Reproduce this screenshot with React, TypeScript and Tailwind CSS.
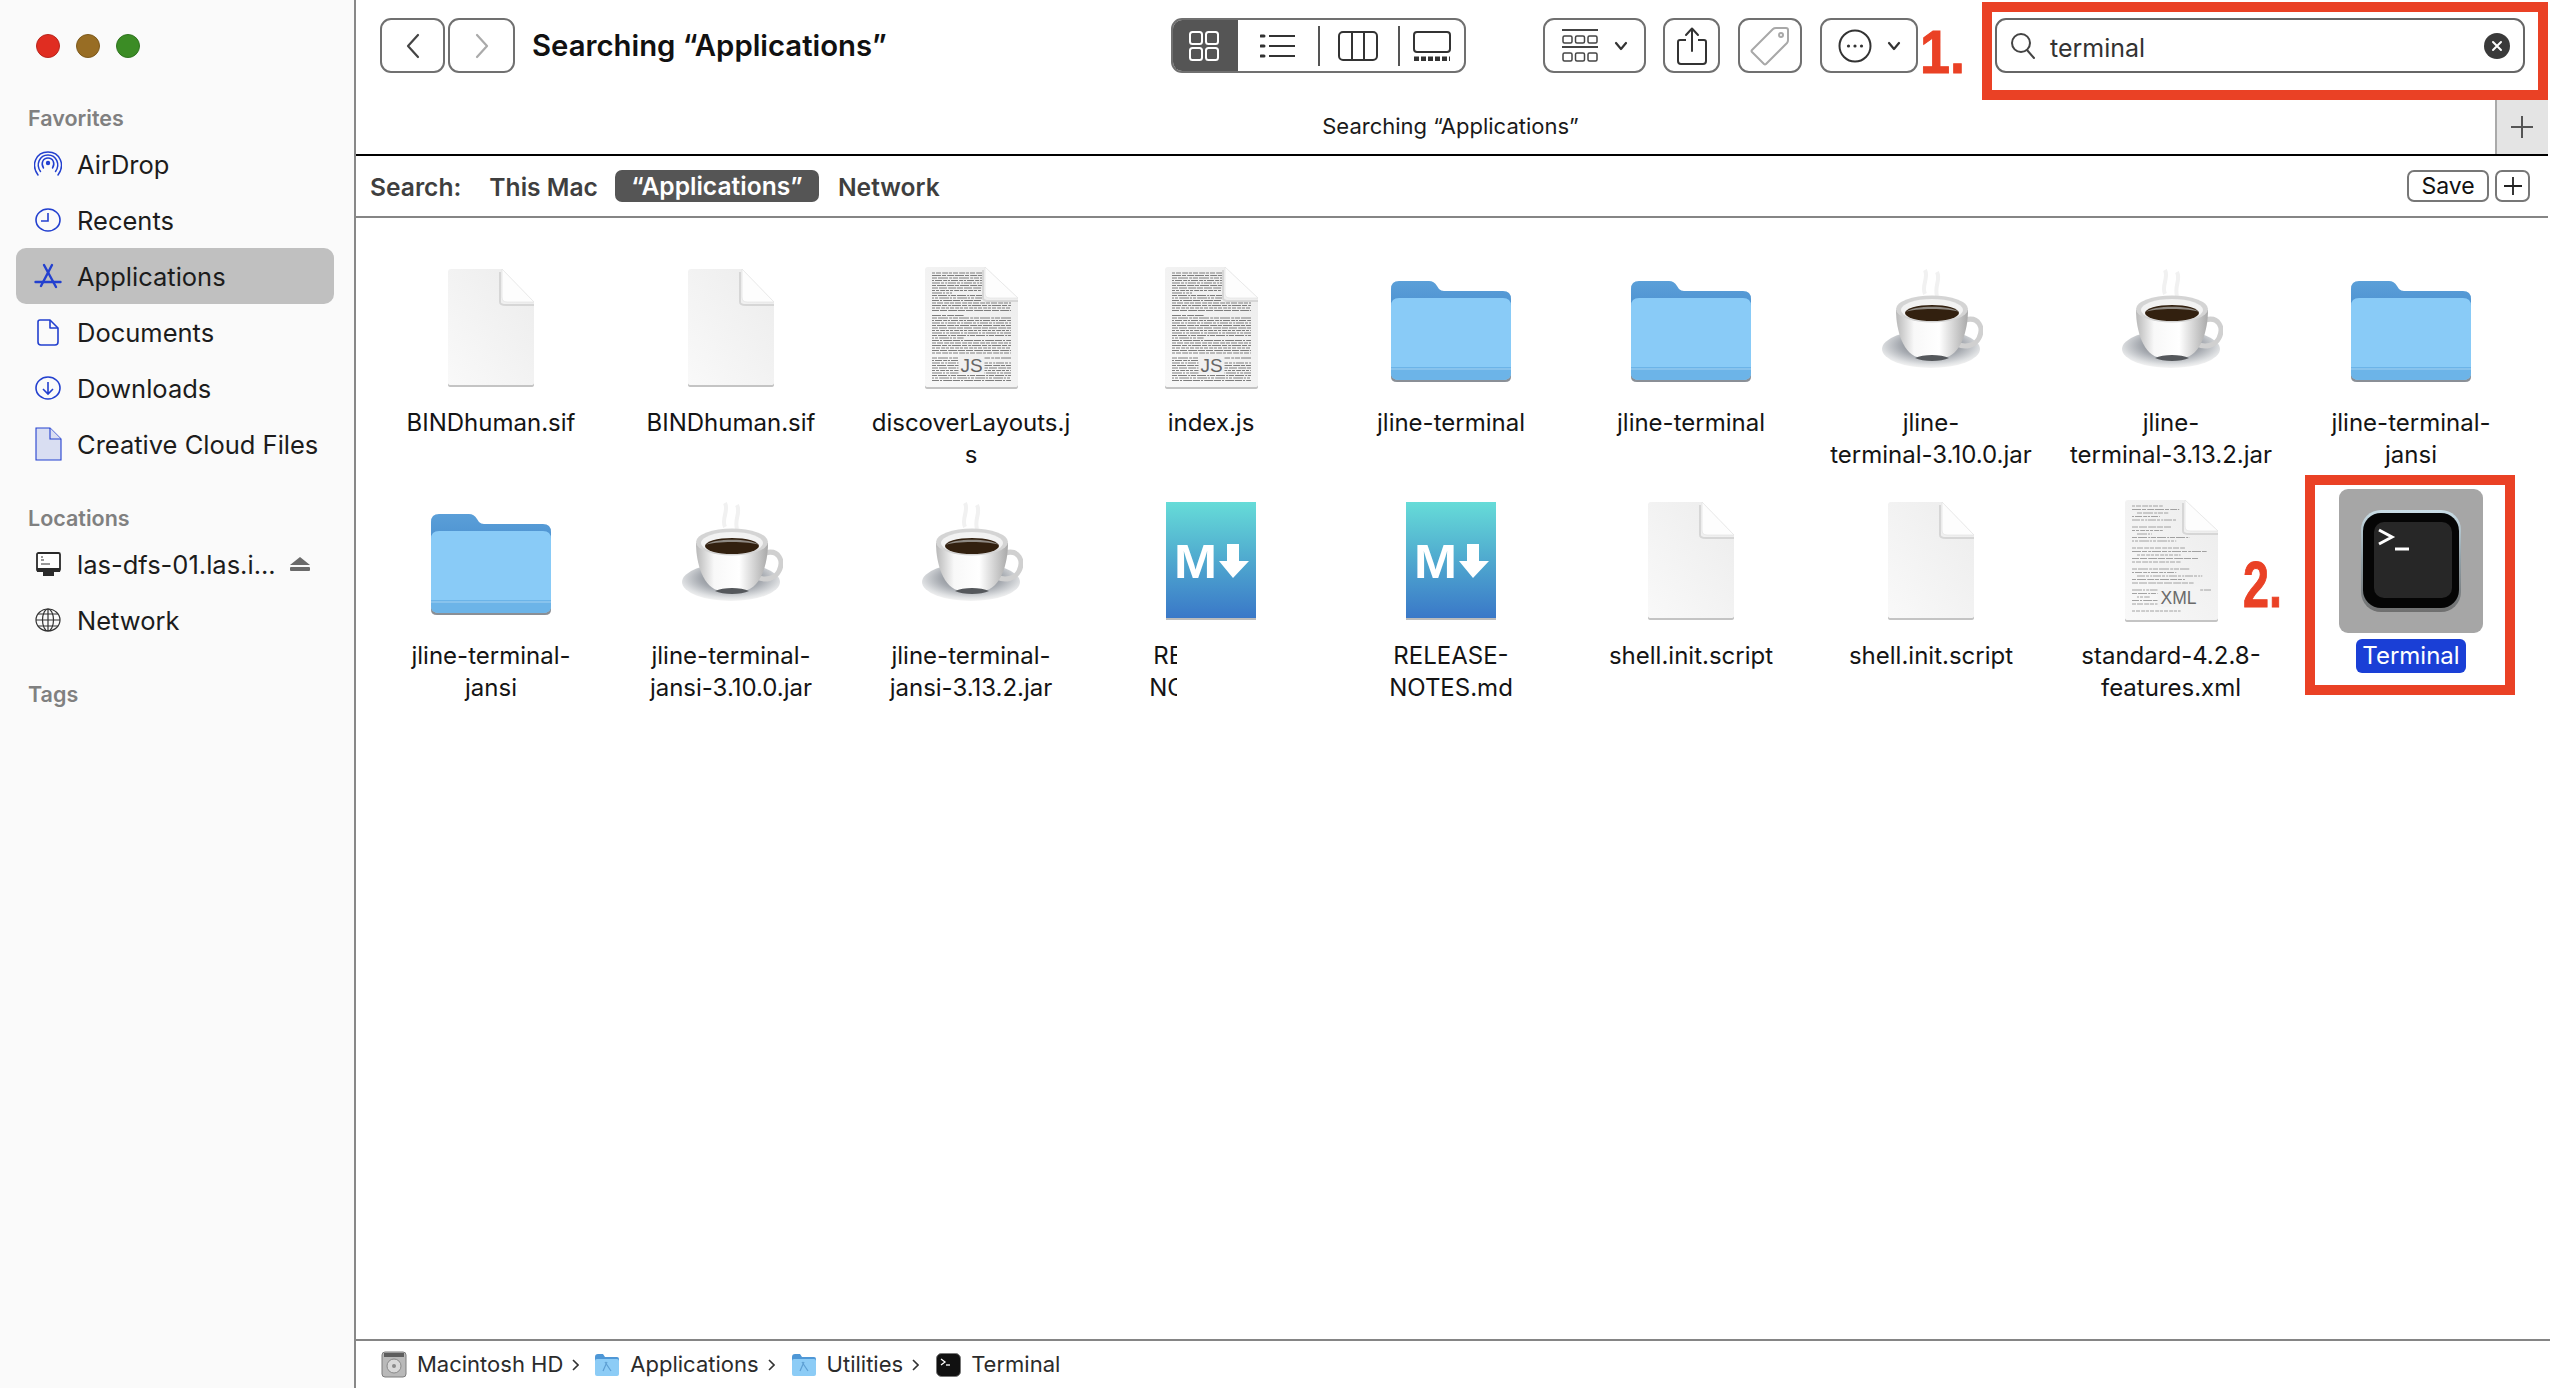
import React from "react";

const font = "font-['Inter','Liberation_Sans',sans-serif]";

function AirDropIcon() {
  return (
    <svg width="28" height="26" viewBox="0 0 28 26" fill="none" stroke="#2340cf" strokeWidth="1.5" strokeLinecap="round">
      <circle cx="14" cy="12" r="2.2" fill="#2340cf" stroke="none" />
      <path d="M9.5 17 C6.5 12.5 9 7 14 7 C19 7 21.5 12.5 18.5 17" />
      <path d="M6.5 20.5 C1.5 13.5 5.5 4 14 4 C22.5 4 26.5 13.5 21.5 20.5" />
      <path d="M4 24 C-3.5 14 2 1 14 1 C26 1 31.5 14 24 24" />
    </svg>
  );
}
function ClockIcon() {
  return (
    <svg width="26" height="24" viewBox="0 0 26 24" fill="none" stroke="#2340cf" strokeWidth="1.6">
      <ellipse cx="13" cy="12" rx="12" ry="11" />
      <path d="M13 5 V13 H6" />
    </svg>
  );
}
function AppsIcon() {
  return (
    <svg width="28" height="26" viewBox="0 0 28 26" fill="none" stroke="#2340cf" strokeWidth="2.4" strokeLinecap="round">
      <path d="M18 2 L7 23" />
      <path d="M10 2 L22 24" />
      <path d="M1.5 19 H26.5" />
    </svg>
  );
}
function DocSmallIcon() {
  return (
    <svg width="22" height="27" viewBox="0 0 22 27" fill="none" stroke="#2340cf" strokeWidth="1.6" strokeLinejoin="round">
      <path d="M3 1 H13 L21 9 V23 Q21 26 18 26 H4 Q1 26 1 23 V3 Q1 1 3 1 Z" />
      <path d="M13 1 V9 H21" />
    </svg>
  );
}
function DownloadIcon() {
  return (
    <svg width="26" height="24" viewBox="0 0 26 24" fill="none" stroke="#2340cf" strokeWidth="1.6">
      <ellipse cx="13" cy="12" rx="12" ry="11" />
      <path d="M13 6 V18 M8 13 L13 18 L18 13" />
    </svg>
  );
}
function CloudFileIcon() {
  return (
    <svg width="27" height="34" viewBox="0 0 27 34" fill="#d9def2" stroke="#2340cf" strokeWidth="1.1">
      <path d="M1 1 H15 L26 12 V33 H1 Z" />
      <path d="M15 1 V12 H26" />
    </svg>
  );
}
function ServerIcon() {
  return (
    <svg width="25" height="25" viewBox="0 0 25 25" fill="none">
      <rect x="1" y="1" width="23" height="18" rx="1.5" fill="#fff" stroke="#2a2a2a" strokeWidth="1.8" />
      <path d="M5 5 H7 M5 8 H8 M5 12 H14" stroke="#333" strokeWidth="1" />
      <rect x="1" y="16" width="23" height="4" fill="#2a2a2a" />
      <rect x="7" y="20" width="11" height="4" fill="#2a2a2a" />
    </svg>
  );
}
function GlobeIcon() {
  return (
    <svg width="26" height="24" viewBox="0 0 26 24" fill="none" stroke="#333" strokeWidth="1.2">
      <ellipse cx="13" cy="12" rx="12" ry="11" />
      <ellipse cx="13" cy="12" rx="5.5" ry="11" />
      <path d="M13 1 V23 M1 12 H25 M3 6 H23 M3 18 H23" />
    </svg>
  );
}

function Chevron({ dir, color }: { dir: "l" | "r"; color: string }) {
  return (
    <svg width="16" height="26" viewBox="0 0 16 26" fill="none" stroke={color} strokeWidth="2.2" strokeLinecap="round" strokeLinejoin="round">
      <path d={dir === "l" ? "M13 2 L3 13 L13 24" : "M3 2 L13 13 L3 24"} />
    </svg>
  );
}
function GridViewIcon() {
  return (
    <svg width="32" height="32" viewBox="0 0 32 32" fill="none" stroke="#fff" strokeWidth="2">
      <rect x="2" y="2" width="12" height="12" rx="2.5" />
      <rect x="18" y="2" width="12" height="12" rx="2.5" />
      <rect x="2" y="18" width="12" height="12" rx="2.5" />
      <rect x="18" y="18" width="12" height="12" rx="2.5" />
    </svg>
  );
}
function ListViewIcon() {
  return (
    <svg width="36" height="26" viewBox="0 0 36 26" fill="none" stroke="#333" strokeWidth="1.8">
      <path d="M9 3 H35 M9 13 H35 M9 23 H35" />
      <path d="M1 3 H4 M1 13 H4 M1 23 H4" strokeWidth="3" strokeLinecap="round" />
    </svg>
  );
}
function ColumnViewIcon() {
  return (
    <svg width="40" height="30" viewBox="0 0 40 30" fill="none" stroke="#333" strokeWidth="2">
      <rect x="1" y="1" width="38" height="28" rx="4" />
      <path d="M14 1 V29 M26 1 V29" />
    </svg>
  );
}
function GalleryViewIcon() {
  return (
    <svg width="38" height="30" viewBox="0 0 38 30" fill="none" stroke="#333" strokeWidth="2">
      <rect x="1" y="1" width="36" height="20" rx="3" />
      <path d="M1 28 H37" strokeWidth="5" strokeDasharray="5 2" />
    </svg>
  );
}
function GroupIcon() {
  return (
    <svg width="36" height="34" viewBox="0 0 36 34" fill="none" stroke="#444" strokeWidth="1.5">
      <path d="M0 1 H36 M0 18 H36" strokeWidth="2" />
      <rect x="1" y="7" width="9" height="7" rx="1.5" />
      <rect x="13.5" y="7" width="9" height="7" rx="1.5" />
      <rect x="26" y="7" width="9" height="7" rx="1.5" />
      <rect x="1" y="24" width="9" height="8" rx="1.5" />
      <rect x="13.5" y="24" width="9" height="8" rx="1.5" />
      <rect x="26" y="24" width="9" height="8" rx="1.5" />
    </svg>
  );
}
function SmallDown() {
  return (
    <svg width="14" height="10" viewBox="0 0 14 10" fill="none" stroke="#333" strokeWidth="2.2" strokeLinecap="round" strokeLinejoin="round">
      <path d="M2 2 L7 8 L12 2" />
    </svg>
  );
}
function ShareIcon() {
  return (
    <svg width="30" height="38" viewBox="0 0 30 38" fill="none" stroke="#333" strokeWidth="2" strokeLinejoin="round">
      <path d="M9 13 H3 Q1 13 1 15 V34 Q1 37 4 37 H26 Q29 37 29 34 V15 Q29 13 27 13 H21" />
      <path d="M15 24 V2 M9 8 L15 1.5 L21 8" strokeLinecap="round" />
    </svg>
  );
}
function TagIcon() {
  return (
    <svg width="40" height="40" viewBox="0 0 40 40" fill="none" stroke="#a8a8a8" strokeWidth="2" strokeLinejoin="round">
      <path d="M2 24 L23 3 Q24 2 26 2 L36 2 Q38 2 38 4 L38 14 Q38 16 37 17 L16 38 Q15 39 14 38 L2 26 Q1 25 2 24 Z" />
      <circle cx="31" cy="9" r="2" />
    </svg>
  );
}
function MoreIcon() {
  return (
    <svg width="34" height="34" viewBox="0 0 34 34" fill="none" stroke="#333" strokeWidth="2">
      <circle cx="17" cy="17" r="15.5" />
      <circle cx="10.5" cy="17" r="1.6" fill="#333" stroke="none" />
      <circle cx="17" cy="17" r="1.6" fill="#333" stroke="none" />
      <circle cx="23.5" cy="17" r="1.6" fill="#333" stroke="none" />
    </svg>
  );
}
function SearchGlass() {
  return (
    <svg width="26" height="28" viewBox="0 0 26 28" fill="none" stroke="#444" strokeWidth="2" strokeLinecap="round">
      <ellipse cx="11" cy="11" rx="9" ry="9" />
      <path d="M17 18 L24 26" />
    </svg>
  );
}
function ClearIcon() {
  return (
    <svg width="26" height="26" viewBox="0 0 26 26" fill="none">
      <circle cx="13" cy="13" r="13" fill="#3a3a3a" />
      <path d="M9 9 L17 17 M17 9 L9 17" stroke="#fff" strokeWidth="2" strokeLinecap="round" />
    </svg>
  );
}

const seeds = [7, 3, 9, 5, 2, 8, 4, 6, 3, 10, 5, 2, 7, 4, 9, 3];
function DocIcon({ kind }: { kind: "blank" | "js" | "xml" }) {
  const blank = kind === "blank";
  const w = blank ? 86 : 93;
  const h = blank ? 116 : 120;
  const f = blank ? 54 : 60;
  const fh = blank ? 33 : 31;
  const rows: React.ReactNode[] = [];
  if (!blank) {
    let i = 0;
    for (let y = 6; y < h - 6; y += kind === "js" ? 2.5 : 3.5) {
      i++;
      const a = seeds[i % seeds.length];
      const b = seeds[(i * 3) % seeds.length];
      const c = seeds[(i * 5 + 2) % seeds.length];
      if (kind === "xml" && i % 6 === 0) continue;
      if (kind === "js" && i % 17 === 0) continue;
      const limit = y < fh + 4 ? f - 10 : w - 14;
      const full = kind === "js" ? limit : limit * (0.45 + (a / 10) * 0.55);
      const width = i % 9 === 0 ? full * 0.4 : full;
      rows.push(
        <line
          key={i}
          x1={kind === "xml" && i % 3 === 0 ? 12 : 7}
          x2={7 + width}
          y1={y}
          y2={y}
          stroke={kind === "js" ? "#6f6f6f" : "#8d8d8d"}
          strokeWidth={kind === "js" ? 0.9 : 0.8}
          strokeDasharray={`${a} 1 ${b} 1.2 ${c} 0.8`}
        />
      );
    }
  }
  return (
    <svg width={w} height={h + 3} viewBox={`0 0 ${w} ${h + 3}`}>
      <defs>
        <linearGradient id={`doc${kind}`} x1="1" y1="0" x2="0" y2="1">
          <stop offset="0" stopColor="#ececec" />
          <stop offset="1" stopColor="#f9f9f9" />
        </linearGradient>
      </defs>
      <path d={`M3 2 H${f} L${w} ${fh + 2} V${h} Q${w} ${h + 2} ${w - 3} ${h + 2} H3 Q0 ${h + 2} 0 ${h} V4 Q0 2 3 2 Z`} fill="#c4c4c4" />
      <path d={`M3 0 H${f} L${w} ${fh} V${h - 2} Q${w} ${h} ${w - 3} ${h} H3 Q0 ${h} 0 ${h - 2} V3 Q0 0 3 0 Z`} fill={`url(#doc${kind})`} />
      {rows}
      <path d={`M${f - 2} 3 V${fh} Q${f - 2} ${fh + 3} ${f + 4} ${fh + 3} H${w}`} fill="none" stroke="#d6d6d6" strokeWidth="2" />
      <path d={`M${f} 0 L${w} ${fh} H${f + 5} Q${f} ${fh} ${f} ${fh - 5} Z`} fill="#fdfdfd" stroke="#e4e4e4" strokeWidth="0.8" />
      {kind === "js" && (
        <>
          <rect x={w / 2 - 13} y={h - 33} width="26" height="20" fill="#f0f0f0" />
          <text x={w / 2} y={h - 15} textAnchor="middle" fontFamily="Liberation Sans" fontSize="19" fill="#666">JS</text>
        </>
      )}
      {kind === "xml" && (
        <>
          <rect x={w / 2 - 14} y={h - 33} width="42" height="20" fill="#f3f3f3" />
          <text x={w / 2 + 7} y={h - 16} textAnchor="middle" fontFamily="Liberation Sans" fontSize="18" fill="#6a6a6a" textLength="36" lengthAdjust="spacingAndGlyphs">XML</text>
        </>
      )}
    </svg>
  );
}

function FolderIcon() {
  return (
    <svg className="mt-[7px]" width="120" height="102" viewBox="0 0 120 102">
      <defs>
        <linearGradient id="folderBack" x1="0" y1="0" x2="0" y2="1">
          <stop offset="0" stopColor="#5b9fd8" />
          <stop offset="1" stopColor="#4288cc" />
        </linearGradient>
      </defs>
      <path d="M0 8 Q0 0 8 0 H38 Q43 0 46 5 L48 8 Q50 10 53 10 H112 Q120 10 120 18 V50 H0 Z" fill="url(#folderBack)" />
      <path d="M0 96 Q0 101 6 101 H114 Q120 101 120 96 V90 H0 Z" fill="#8a8f96" />
      <path d="M0 25 Q0 17 8 17 H112 Q120 17 120 25 V92 Q120 99 112 99 H8 Q0 99 0 92 Z" fill="#89cbf7" />
      <path d="M0 86 H120 V92 Q120 99 112 99 H8 Q0 99 0 92 Z" fill="#6cb4e8" />
      <path d="M0 88 H120" stroke="#92c9ef" strokeWidth="1.5" />
    </svg>
  );
}

function CoffeeIcon() {
  return (
    <svg className="mb-[16px]" width="104" height="104" viewBox="0 0 104 104">
      <defs>
        <radialGradient id="saucer" cx="0.5" cy="0.4" r="0.6">
          <stop offset="0" stopColor="#5f6268" />
          <stop offset="0.55" stopColor="#a9adb3" />
          <stop offset="0.85" stopColor="#dfe1e3" />
          <stop offset="1" stopColor="#f4f4f4" />
        </radialGradient>
        <linearGradient id="mug" x1="0" y1="0" x2="1" y2="0">
          <stop offset="0" stopColor="#b8b8b8" />
          <stop offset="0.25" stopColor="#f8f8f8" />
          <stop offset="0.6" stopColor="#ffffff" />
          <stop offset="1" stopColor="#a9a9a9" />
        </linearGradient>
      </defs>
      <path d="M46 26 C42 18 50 10 46 2 M58 28 C55 18 62 12 58 4" fill="none" stroke="#f1f1f1" strokeWidth="4" />
      <ellipse cx="52" cy="81" rx="49" ry="19" fill="url(#saucer)" />
      <path d="M86 52 C100 48 105 60 100 70 C96 78 86 80 78 76" fill="none" stroke="#d0d0d0" strokeWidth="5" />
      <path d="M17 42 C17 62 24 88 42 90 H64 C82 88 89 62 89 42 Z" fill="url(#mug)" />
      <path d="M36 90 C44 94 62 94 70 90 C62 86 44 86 36 90 Z" fill="#55585c" />
      <ellipse cx="53" cy="41" rx="36" ry="13.5" fill="#d4d4d4" />
      <ellipse cx="53" cy="42" rx="31" ry="11" fill="#f2f2f2" />
      <ellipse cx="53" cy="45" rx="27" ry="8" fill="#32200f" />
      <path d="M27 44 C34 37 72 37 80 44 C72 40 34 40 27 44 Z" fill="#8f8a84" />
    </svg>
  );
}

function MdIcon() {
  return (
    <svg width="92" height="118" viewBox="0 0 92 118">
      <defs>
        <linearGradient id="mdg" x1="0" y1="0" x2="0" y2="1">
          <stop offset="0" stopColor="#66dcd8" />
          <stop offset="0.5" stopColor="#4fa9cf" />
          <stop offset="1" stopColor="#3a78c8" />
        </linearGradient>
      </defs>
      <rect x="1" y="116" width="90" height="2" fill="#bcbcbc" />
      <rect x="1" y="0" width="90" height="116" fill="url(#mdg)" />
      <text x="9" y="76" fontFamily="Liberation Sans" fontWeight="700" fontSize="48" fill="#fff" textLength="43" lengthAdjust="spacingAndGlyphs">M</text>
      <path d="M62 42 H74 V59 H84 L68 76 L54 59 H62 Z" fill="#fff" />
    </svg>
  );
}

function TerminalIcon() {
  return (
    <svg width="100" height="102" viewBox="0 0 100 102">
      <defs>
        <linearGradient id="termEdge" x1="0" y1="0" x2="0" y2="1">
          <stop offset="0" stopColor="#c9dde6" />
          <stop offset="0.5" stopColor="#8f9ea5" />
          <stop offset="1" stopColor="#6f6f6f" />
        </linearGradient>
      </defs>
      <rect x="0" y="0" width="100" height="102" rx="20" fill="url(#termEdge)" />
      <rect x="2" y="3" width="96" height="95" rx="18" fill="#050505" />
      <rect x="13" y="12" width="78" height="76" rx="10" fill="#272727" />
      <path d="M18 20 L31 27 L18 34" fill="none" stroke="#fff" strokeWidth="3" />
      <path d="M34 39 H48" stroke="#fff" strokeWidth="3" />
    </svg>
  );
}

function SmallHd() {
  return (
    <svg width="26" height="27" viewBox="0 0 26 27">
      <rect x="1" y="1" width="24" height="25" rx="3" fill="#b9b9b9" stroke="#7c7c7c" />
      <rect x="3" y="2" width="20" height="4" fill="#5e5e5e" />
      <circle cx="13" cy="15" r="7" fill="#d9d9d9" stroke="#8a8a8a" />
      <circle cx="13" cy="15" r="2" fill="#8a8a8a" />
    </svg>
  );
}
function SmallFolder() {
  return (
    <svg width="26" height="24" viewBox="0 0 26 24">
      <path d="M1 4 Q1 1 4 1 H9 L11 4 H23 Q25 4 25 6 V10 H1 Z" fill="#4e97d6" />
      <path d="M1 8 Q1 6 3 6 H23 Q25 6 25 8 V21 Q25 23 23 23 H3 Q1 23 1 21 Z" fill="#8cccf6" />
      <path d="M9 18 L13 9 M17 18 L11 9" stroke="#5d9fd3" strokeWidth="1.2" />
    </svg>
  );
}
function SmallTerminal() {
  return (
    <svg width="25" height="24" viewBox="0 0 25 24">
      <rect x="0.5" y="0.5" width="24" height="23" rx="5" fill="#111" stroke="#777" />
      <path d="M5 6 L9 9 L5 12" fill="none" stroke="#fff" strokeWidth="1.3" />
      <path d="M10 12 H14" stroke="#fff" strokeWidth="1.3" />
    </svg>
  );
}

type Item = { icon: React.ReactNode; lines: string[]; clip?: boolean; selected?: boolean };

const items: Item[] = [
  { icon: <DocIcon kind="blank" />, lines: ["BINDhuman.sif"] },
  { icon: <DocIcon kind="blank" />, lines: ["BINDhuman.sif"] },
  { icon: <DocIcon kind="js" />, lines: ["discoverLayouts.j", "s"] },
  { icon: <DocIcon kind="js" />, lines: ["index.js"] },
  { icon: <FolderIcon />, lines: ["jline-terminal"] },
  { icon: <FolderIcon />, lines: ["jline-terminal"] },
  { icon: <CoffeeIcon />, lines: ["jline-", "terminal-3.10.0.jar"] },
  { icon: <CoffeeIcon />, lines: ["jline-", "terminal-3.13.2.jar"] },
  { icon: <FolderIcon />, lines: ["jline-terminal-", "jansi"] },
  { icon: <FolderIcon />, lines: ["jline-terminal-", "jansi"] },
  { icon: <CoffeeIcon />, lines: ["jline-terminal-", "jansi-3.10.0.jar"] },
  { icon: <CoffeeIcon />, lines: ["jline-terminal-", "jansi-3.13.2.jar"] },
  { icon: <MdIcon />, lines: ["RELEASE-", "NOTES.md"], clip: true },
  { icon: <MdIcon />, lines: ["RELEASE-", "NOTES.md"] },
  { icon: <DocIcon kind="blank" />, lines: ["shell.init.script"] },
  { icon: <DocIcon kind="blank" />, lines: ["shell.init.script"] },
  { icon: <DocIcon kind="xml" />, lines: ["standard-4.2.8-", "features.xml"] },
  { icon: <TerminalIcon />, lines: ["Terminal"], selected: true },
];

function SidebarRow({ icon, label, active, extra }: { icon: React.ReactNode; label: string; active?: boolean; extra?: React.ReactNode }) {
  return (
    <div className={`ml-4 mr-[20px] flex h-14 items-center rounded-[10px] pl-3 ${active ? "bg-[#c0c0c0]" : ""}`}>
      <div className="flex w-10 justify-center">{icon}</div>
      <span className="ml-[9px] pt-[1px] text-[25.5px] leading-none text-[#1c1c1c]">{label}</span>
      {extra}
    </div>
  );
}

function SectionLabel({ children, className }: { children: React.ReactNode; className: string }) {
  return <div className={`flex h-7 items-center pl-[28px] text-[21.5px] font-semibold text-[#808080] ${className}`}>{children}</div>;
}

function ToolButton({ className, children }: { className: string; children: React.ReactNode }) {
  return <div className={`flex h-[55px] items-center justify-center rounded-[11px] border-2 border-[#707070] ${className}`}>{children}</div>;
}

function Cell({ item }: { item: Item }) {
  return (
    <div className="flex h-[233px] flex-col items-center">
      <div className="flex h-[152px] w-full items-center justify-center">
        {item.selected ? (
          <div className="flex h-[144px] w-[144px] items-center justify-center rounded-[9px] bg-[#a6a6a6]">{item.icon}</div>
        ) : (
          item.icon
        )}
      </div>
      <div className="mt-[3px] flex w-full flex-col items-center text-[24px] leading-[32px] text-[#141414]">
        {item.selected ? (
          <span className="-mt-[1px] flex h-[34px] w-[110px] items-center justify-center rounded-[6px] bg-[#1a3fd6] text-[#fff]">Terminal</span>
        ) : item.clip ? (
          <div className="flex w-full flex-col items-center [clip-path:inset(0_154px_0_0)]">
            {item.lines.map((l) => (
              <span key={l}>{l}</span>
            ))}
          </div>
        ) : (
          item.lines.map((l) => <span key={l}>{l}</span>)
        )}
      </div>
    </div>
  );
}

function Crumb({ icon, label, chevron, className }: { icon: React.ReactNode; label: string; chevron?: boolean; className?: string }) {
  return (
    <div className={`flex items-center ${className ?? ""}`}>
      {icon}
      <span className="ml-[10px] text-[22px] text-[#2b2b2b]">{label}</span>
      {chevron && (
        <svg className="ml-[9px]" width="7" height="12" viewBox="0 0 7 12" fill="none" stroke="#333" strokeWidth="1.6">
          <path d="M1 1 L6 6 L1 11" />
        </svg>
      )}
    </div>
  );
}

export default function App() {
  return (
    <div className={`relative flex h-[1388px] w-[2550px] overflow-hidden bg-white ${font}`}>
      <aside className="flex h-full w-[356px] shrink-0 flex-col border-r-2 border-[#888888] bg-[#fafafa]">
        <div className="flex gap-4 pl-9 pt-[34px]">
          <span className="h-6 w-6 rounded-full border border-[#b9261d] bg-[#e02d21]" />
          <span className="h-6 w-6 rounded-full border border-[#7d5a1c] bg-[#986d24]" />
          <span className="h-6 w-6 rounded-full border border-[#2f7420] bg-[#3b8c25]" />
        </div>
        <SectionLabel className="mt-[46px] mb-1">Favorites</SectionLabel>
        <SidebarRow icon={<AirDropIcon />} label="AirDrop" />
        <SidebarRow icon={<ClockIcon />} label="Recents" />
        <SidebarRow icon={<AppsIcon />} label="Applications" active />
        <SidebarRow icon={<DocSmallIcon />} label="Documents" />
        <SidebarRow icon={<DownloadIcon />} label="Downloads" />
        <SidebarRow icon={<CloudFileIcon />} label="Creative Cloud Files" />
        <SectionLabel className="mt-8 mb-1">Locations</SectionLabel>
        <SidebarRow
          icon={<ServerIcon />}
          label="las-dfs-01.las.i..."
          extra={
            <svg className="ml-[14px]" width="20" height="14" viewBox="0 0 20 14" fill="#6a6a6a">
              <path d="M10 0 L20 8 H0 Z" />
              <rect x="0" y="10" width="20" height="4" rx="1" />
            </svg>
          }
        />
        <SidebarRow icon={<GlobeIcon />} label="Network" />
        <SectionLabel className="mt-8">Tags</SectionLabel>
      </aside>

      <main className="flex min-w-0 flex-1 flex-col">
        <div className="flex h-[100px] shrink-0 items-start pl-6 pt-[18px]">
          <ToolButton className="w-[65px]"><Chevron dir="l" color="#444" /></ToolButton>
          <ToolButton className="ml-[3px] w-[67px]"><Chevron dir="r" color="#aaa" /></ToolButton>
          <h1 className="ml-[17px] flex h-[55px] w-[639px] items-center text-[29.3px] font-semibold text-[#111]">Searching “Applications”</h1>
          <div className="flex h-[55px] w-[295px] items-center overflow-hidden rounded-[11px] border-2 border-[#707070]">
            <div className="flex h-full w-[65px] items-center justify-center bg-[#555555] pr-[4px]"><GridViewIcon /></div>
            <div className="flex w-[80px] justify-center"><ListViewIcon /></div>
            <div className="h-[40px] w-[2px] bg-[#555]" />
            <div className="flex w-[78px] justify-center pr-[2px]"><ColumnViewIcon /></div>
            <div className="h-[40px] w-[2px] bg-[#555]" />
            <div className="flex flex-1 justify-center"><GalleryViewIcon /></div>
          </div>
          <ToolButton className="ml-[77px] w-[103px] gap-[16px]"><GroupIcon /><SmallDown /></ToolButton>
          <ToolButton className="ml-[17px] w-[57px]"><ShareIcon /></ToolButton>
          <ToolButton className="ml-[18px] w-[64px]"><TagIcon /></ToolButton>
          <ToolButton className="ml-[18px] w-[98px] gap-[15px]"><MoreIcon /><SmallDown /></ToolButton>
          <div className="ml-[77px] flex h-[55px] w-[530px] items-center rounded-[11px] border-2 border-[#666] pl-[13px] pr-[13px]">
            <SearchGlass />
            <span className="ml-[14px] flex-1 pt-[7px] text-[25px] text-[#333]">terminal</span>
            <ClearIcon />
          </div>
        </div>

        <div className="mr-[2px] flex h-[56px] shrink-0 border-b-2 border-[#000]">
          <div className="flex h-full flex-1 items-center justify-center pb-[2px] pl-[50px] text-[22px] text-[#1a1a1a]">Searching “Applications”</div>
          <div className="flex h-full w-[53px] items-center justify-center border-l-2 border-[#aaaaaa] bg-[#e4e4e4] pr-[2px]">
            <svg width="22" height="22" viewBox="0 0 22 22" stroke="#555" strokeWidth="2">
              <path d="M11 0 V22 M0 11 H22" />
            </svg>
          </div>
        </div>

        <div className="mr-[2px] flex h-[62px] shrink-0 items-center border-b-2 border-[#858585] pl-[14px] pr-[18px] text-[24.6px] font-semibold text-[#3f3f3f]">
          <span className="pt-[2px]">Search:</span>
          <span className="ml-[28px] pt-[2px]">This Mac</span>
          <span className="ml-[17px] flex h-[32px] w-[204px] items-center justify-center rounded-[7px] bg-[#555555] pt-[1px] text-[#fff]">“Applications”</span>
          <span className="ml-[19px] pt-[2px]">Network</span>
          <span className="ml-auto flex h-[32px] w-[82px] items-center justify-center rounded-[7px] border-2 border-[#777] text-[23px] font-normal text-[#111]">Save</span>
          <span className="ml-[6px] flex h-[32px] w-[35px] items-center justify-center rounded-[7px] border-2 border-[#777]">
            <svg width="18" height="18" viewBox="0 0 18 18" stroke="#222" strokeWidth="1.8">
              <path d="M9 0 V18 M0 9 H18" />
            </svg>
          </span>
        </div>

        <div className="grid flex-1 grid-cols-[repeat(9,240px)] content-start pl-[15px] pt-[34px]">
          {items.map((item, i) => (
            <Cell key={i} item={item} />
          ))}
        </div>

        <div className="flex h-[49px] shrink-0 items-center border-t-2 border-[#858585] pl-[25px]">
          <Crumb icon={<SmallHd />} label="Macintosh HD" chevron />
          <Crumb className="ml-[15px]" icon={<SmallFolder />} label="Applications" chevron />
          <Crumb className="ml-[16px]" icon={<SmallFolder />} label="Utilities" chevron />
          <Crumb className="ml-[17px]" icon={<SmallTerminal />} label="Terminal" />
        </div>
      </main>

      <div className="absolute left-[1982px] top-[2px] h-[98px] w-[566px] border-[10px] border-[#ea4125]" />
      <div className="absolute left-[2305px] top-[475px] h-[220px] w-[210px] border-[10px] border-[#ea4125]" />
      <span className="absolute left-[1920px] top-[21px] origin-left scale-x-[0.87] font-['Liberation_Sans',sans-serif] text-[62px] font-bold leading-[62px] text-[#ea4125] [-webkit-text-stroke:1px_#ea4125]">1.</span>
      <span className="absolute left-[2243px] top-[552px] origin-left scale-x-[0.72] font-['Liberation_Sans',sans-serif] text-[65px] font-bold leading-[65px] text-[#ea4125] [-webkit-text-stroke:1px_#ea4125]">2.</span>
    </div>
  );
}
